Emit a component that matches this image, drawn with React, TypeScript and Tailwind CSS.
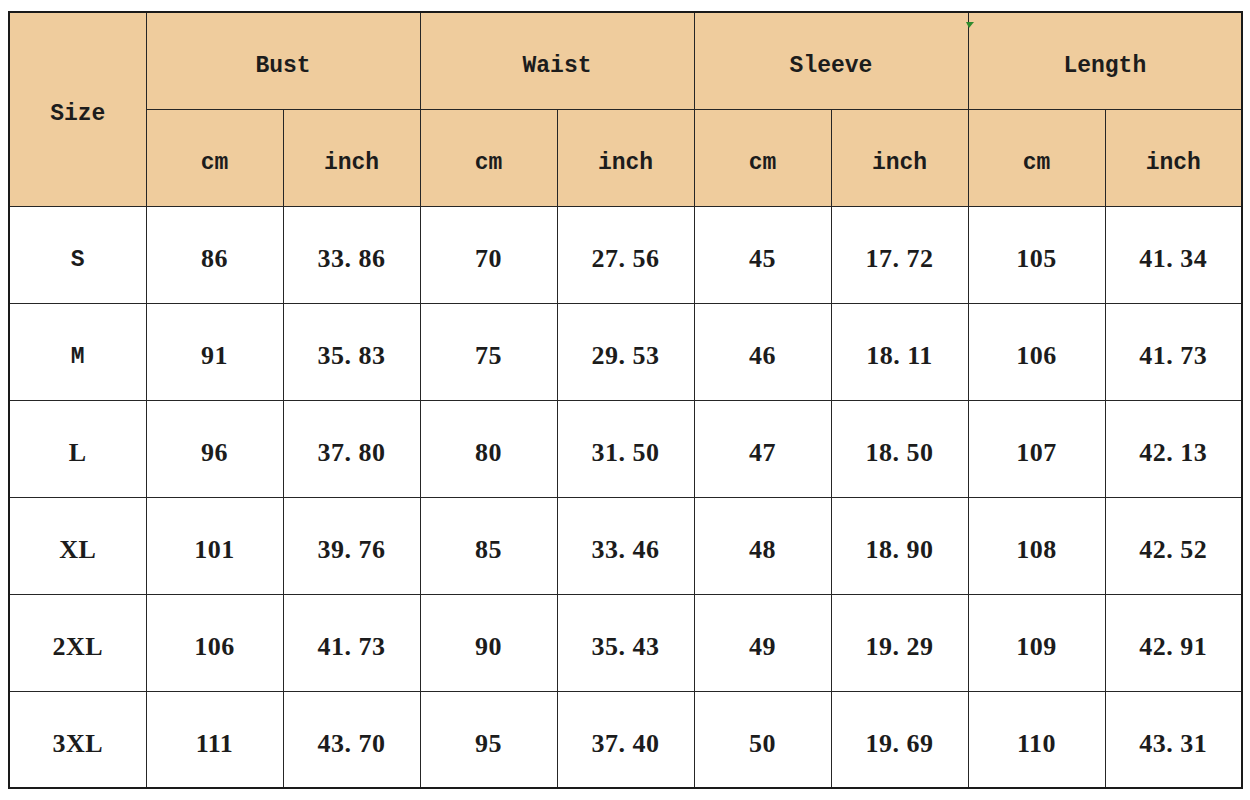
import React from 'react';

type Row = {
	size: string;
	vals: string[];
};

const rows: Row[] = [
	{ size: 'S', vals: ['86', '33.86', '70', '27.56', '45', '17.72', '105', '41.34'] },
	{ size: 'M', vals: ['91', '35.83', '75', '29.53', '46', '18.11', '106', '41.73'] },
	{ size: 'L', vals: ['96', '37.80', '80', '31.50', '47', '18.50', '107', '42.13'] },
	{ size: 'XL', vals: ['101', '39.76', '85', '33.46', '48', '18.90', '108', '42.52'] },
	{ size: '2XL', vals: ['106', '41.73', '90', '35.43', '49', '19.29', '109', '42.91'] },
	{ size: '3XL', vals: ['111', '43.70', '95', '37.40', '50', '19.69', '110', '43.31'] },
];

const groups = ['Bust', 'Waist', 'Sleeve', 'Length'];

const mono = "font-['Liberation_Mono',monospace] font-bold text-[23px]";
const serif = "font-['Liberation_Serif',serif] font-bold text-[26px] tracking-[0.5px]";

// numbers in the source image use a wide half-width period
const Num = ({ v }: { v: string }) => {
	const [a, b] = v.split('.');
	if (b === undefined) return <span>{a}</span>;
	return (
		<span>
			{a}
			<span className="inline-block w-[14px] text-left">.</span>
			{b}
		</span>
	);
};

const App: React.FC = () => {
	return (
		<div className="w-[1250px] h-[800px] bg-white text-[#1c1c1c] relative">
			<table className="table-fixed border-collapse w-[1235px] ml-[8px] mt-[11px] border-2 border-[#1a1a1a]">
				<colgroup>
					{Array.from({ length: 9 }).map((_, i) => (
						<col key={i} className="w-[137px]" />
					))}
				</colgroup>
				<thead>
					<tr className="h-[97px] bg-[#efcc9d]">
						<th rowSpan={2} className={`border border-[#262626] ${mono} text-center pt-[10px]`}>
							Size
						</th>
						{groups.map((g) => (
							<th key={g} colSpan={2} className={`border border-[#262626] ${mono} text-center pt-[10px]`}>
								{g}
							</th>
						))}
					</tr>
					<tr className="h-[97px] bg-[#efcc9d]">
						{groups.map((g) => (
							<React.Fragment key={g}>
								<th className={`border border-[#262626] ${mono} text-center pt-3`}>cm</th>
								<th className={`border border-[#262626] ${mono} text-center pt-3`}>inch</th>
							</React.Fragment>
						))}
					</tr>
				</thead>
				<tbody>
					{rows.map((r) => (
						<tr key={r.size} className="h-[97px]">
							<td
								className={`border border-[#262626] text-center ${
									r.size === 'S' || r.size === 'M' ? `${mono} pt-3` : `${serif} pt-2`
								}`}
							>
								{r.size}
							</td>
							{r.vals.map((v, i) => (
								<td key={i} className={`border border-[#262626] text-center pt-2 ${serif}`}>
									<Num v={v} />
								</td>
							))}
						</tr>
					))}
				</tbody>
			</table>
			<svg className="absolute left-[966px] top-[11px]" width="8" height="6" viewBox="0 0 8 6">
				<path d="M0 0 L8 0 L3 6 Z" fill="#2e8b2e" />
			</svg>
		</div>
	);
};

export default App;
